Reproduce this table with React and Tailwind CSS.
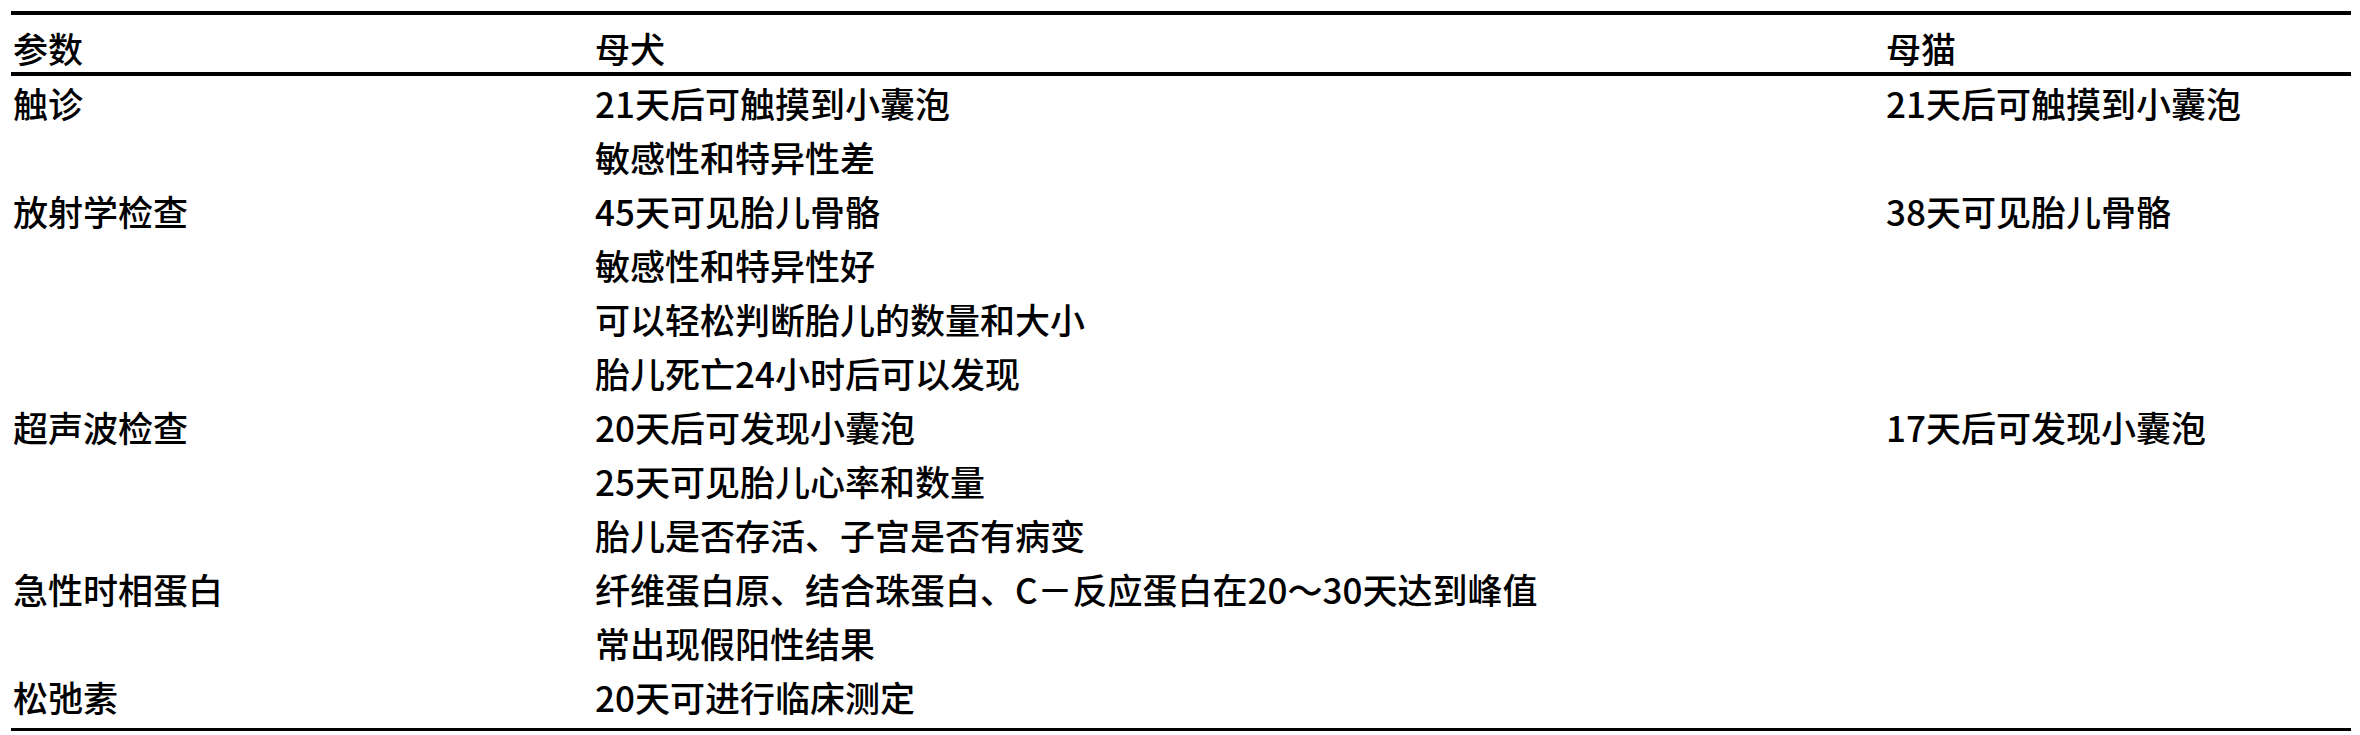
import React from "react";

const rows = [
  {
    param: "触诊",
    dog: ["21天后可触摸到小囊泡", "敏感性和特异性差"],
    cat: ["21天后可触摸到小囊泡"]
  },
  {
    param: "放射学检查",
    dog: [
      "45天可见胎儿骨骼",
      "敏感性和特异性好",
      "可以轻松判断胎儿的数量和大小",
      "胎儿死亡24小时后可以发现"
    ],
    cat: ["38天可见胎儿骨骼"]
  },
  {
    param: "超声波检查",
    dog: ["20天后可发现小囊泡", "25天可见胎儿心率和数量", "胎儿是否存活、子宫是否有病变"],
    cat: ["17天后可发现小囊泡"]
  },
  {
    param: "急性时相蛋白",
    dog: ["纤维蛋白原、结合珠蛋白、C－反应蛋白在20～30天达到峰值", "常出现假阳性结果"],
    cat: []
  },
  {
    param: "松弛素",
    dog: ["20天可进行临床测定"],
    cat: []
  }
];

const App = () => {
  return (
    <div
      className="w-[2360px] h-[735px] bg-white text-black text-[35px] leading-[54px] font-medium"
      style={{ fontFamily: '"Noto Sans CJK SC", "Noto Sans", sans-serif' }}
    >
      <div className="ml-[11px] w-[2340px] pt-[11px]">
        {/* Header */}
        <div className="border-t-4 border-b-4 border-black grid grid-cols-[584px_1291px_1fr] pt-[6px] h-[65px]">
          <div className="pl-[2px]">参数</div>
          <div>母犬</div>
          <div>母猫</div>
        </div>

        {/* Body */}
        <div className="border-b-[3px] border-black pb-[4px]">
          {rows.map((row) => (
            <div key={row.param} className="grid grid-cols-[584px_1291px_1fr]">
              <div className="pl-[2px]">{row.param}</div>
              <div className="flex flex-col">
                {row.dog.map((line) => (
                  <div key={line}>{line}</div>
                ))}
              </div>
              <div className="flex flex-col">
                {row.cat.map((line) => (
                  <div key={line}>{line}</div>
                ))}
              </div>
            </div>
          ))}
        </div>
      </div>
    </div>
  );
};

export default App;
